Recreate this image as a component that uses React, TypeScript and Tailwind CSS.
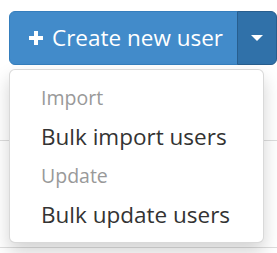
import React from 'react';

type MenuRow = { kind: 'header' | 'item'; label: string };

const rows: MenuRow[] = [
  { kind: 'header', label: 'Import' },
  { kind: 'item', label: 'Bulk import users' },
  { kind: 'header', label: 'Update' },
  { kind: 'item', label: 'Bulk update users' },
];

function PlusIcon() {
  return (
    <svg width="14" height="14" viewBox="0 0 14 14" className="shrink-0">
      <rect x="5" y="0" width="4" height="14" fill="#fff" />
      <rect x="0" y="5" width="14" height="4" fill="#fff" />
    </svg>
  );
}

export default function App() {
  return (
    <div
      className="relative w-[277px] h-[253px] overflow-hidden bg-white"
      style={{ fontFamily: '"Open Sans", "Liberation Sans", sans-serif' }}
    >
      <div className="pt-[11px] pl-[9px] flex">
        <button className="flex items-center gap-[9px] h-[54px] w-[233px] pl-[19px] rounded-l-[6px] bg-[#428bca] border border-[#357ebd] text-white text-[22.5px]">
          <PlusIcon />
          <span>Create new user</span>
        </button>
        <button className="flex items-center justify-center h-[54px] w-[40px] shrink-0 -ml-px bg-[#3071a9] border border-[#285e8e] rounded-r-[6px]">
          <span className="block w-0 h-0 border-x-[6px] border-x-transparent border-t-[6px] border-t-white" />
        </button>
      </div>

      <div className="mt-[75px] border-t border-[#ddd] h-[107px]" />
      <div className="border-t border-[#ddd]" />

      <div className="absolute left-[9px] top-[69px] w-[255px] h-[174px] bg-white rounded-[6px] border border-black/15 shadow-[0_9px_18px_rgba(0,0,0,0.175)] pt-[8px] pb-[7px]">
        {rows.map((row) =>
          row.kind === 'header' ? (
            <div key={row.label} className="h-[39px] leading-[39px] pl-[31px] text-[19.5px] text-[#999]">
              {row.label}
            </div>
          ) : (
            <div key={row.label} className="h-[39px] leading-[39px] pl-[31px] text-[22.5px] text-[#333]">
              {row.label}
            </div>
          )
        )}
      </div>
    </div>
  );
}
